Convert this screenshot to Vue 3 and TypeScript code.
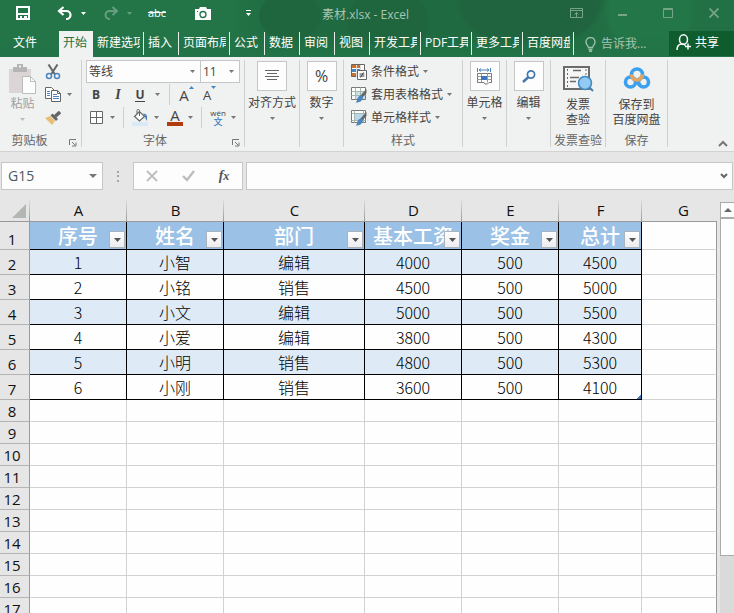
<script setup lang="ts">
import { ref } from 'vue'

interface Tab {
  label: string
  wide?: boolean
}

interface Row {
  id: number
  name: string
  dept: string
  base: number
  bonus: number
  total: number
}

const tabs: Tab[] = [
  { label: '新建选项', wide: true },
  { label: '插入' },
  { label: '页面布局', wide: true },
  { label: '公式' },
  { label: '数据' },
  { label: '审阅' },
  { label: '视图' },
  { label: '开发工具', wide: true },
  { label: 'PDF工具', wide: true },
  { label: '更多工具', wide: true },
  { label: '百度网盘', wide: true },
]

const columns: string[] = ['A', 'B', 'C', 'D', 'E', 'F', 'G']
const headings: string[] = ['序号', '姓名', '部门', '基本工资', '奖金', '总计']
const rows: Row[] = [
  { id: 1, name: '小智', dept: '编辑', base: 4000, bonus: 500, total: 4500 },
  { id: 2, name: '小铭', dept: '销售', base: 4500, bonus: 500, total: 5000 },
  { id: 3, name: '小文', dept: '编辑', base: 5000, bonus: 500, total: 5500 },
  { id: 4, name: '小爱', dept: '编辑', base: 3800, bonus: 500, total: 4300 },
  { id: 5, name: '小明', dept: '销售', base: 4800, bonus: 500, total: 5300 },
  { id: 6, name: '小刚', dept: '销售', base: 3600, bonus: 500, total: 4100 },
]
const emptyRows: number[] = Array.from({ length: 10 }, (_, i) => i + 8)

const cellRef = ref('G15')
const formula = ref('')
</script>

<template>
  <div class="excel">
    <header class="top">
      <div class="titlebar">
        <div class="quick">
          <button class="ib" type="button" aria-label="保存">
            <svg width="14" height="14" viewBox="0 0 14 14"><path d="M1 1h12v12H1z" fill="none" stroke="#fff" stroke-width="2" /><path d="M2 7h10v2H2zM4 10h2v3H4zM8 10h3v3H8z" fill="#fff" /></svg>
          </button>
          <div class="pair">
            <button class="ib undo" type="button" aria-label="撤消">
              <svg width="16" height="14" viewBox="0 0 16 14"><path d="M2 5h7.500a4 4 0 0 1 0 8H9M6.500 1 2 5l4.500 4" fill="none" stroke="#fff" stroke-width="2.200" /></svg>
            </button>
            <button class="ib drop" type="button" aria-label="撤消列表">
              <svg width="5" height="3" viewBox="0 0 5 3"><path d="M0 0h5L2.500 3z" fill="#fff" /></svg>
            </button>
          </div>
          <div class="pair faded">
            <button class="ib undo" type="button" aria-label="恢复">
              <svg width="16" height="14" viewBox="0 0 16 14"><path d="M14 5H6.500a4 4 0 0 0 0 8H7M9.500 1 14 5 9.500 9" fill="none" stroke="#fff" stroke-width="2" /></svg>
            </button>
            <button class="ib drop" type="button" aria-label="恢复列表">
              <svg width="5" height="3" viewBox="0 0 5 3"><path d="M0 0h5L2.500 3z" fill="#fff" /></svg>
            </button>
          </div>
          <button class="ib strike" type="button">abc</button>
          <button class="ib" type="button" aria-label="照相机">
            <svg width="16" height="13" viewBox="0 0 16 13"><path d="M0 2h4l1-2h6l1 2h4v11H0z" fill="#fff" /><circle cx="8" cy="7.500" r="3" fill="none" stroke="#217346" stroke-width="1.300" /><path d="M2 4h1v1H2z" fill="#217346" /></svg>
          </button>
          <button class="ib" type="button" aria-label="自定义快速访问工具栏">
            <svg width="5" height="6" viewBox="0 0 5 6"><path d="M0 0h5v1H0zM0 3h5L2.500 6z" fill="#fff" /></svg>
          </button>
        </div>
        <h1 class="title">素材.xlsx - Excel</h1>
        <div class="window">
          <button class="ib" type="button" aria-label="功能区显示选项">
            <svg width="13" height="10" viewBox="0 0 13 10"><path d="M.5.5h12v9H.5zM1 2.500h11M6.500 9V4.500M4.500 6.500l2-2 2 2" fill="none" stroke="#75a489" /></svg>
          </button>
          <button class="ib" type="button" aria-label="最小化">
            <svg width="9" height="10" viewBox="0 0 9 10"><path d="M0 6h9v2H0z" fill="#75a489" /></svg>
          </button>
          <button class="ib" type="button" aria-label="最大化">
            <svg width="10" height="10" viewBox="0 0 10 10"><path d="M.5.5h9v9h-9zM0 1.500h10" fill="none" stroke="#75a489" /></svg>
          </button>
          <button class="ib" type="button" aria-label="关闭">
            <svg width="10" height="10" viewBox="0 0 10 10"><path d="m.5.500 9 9m0-9-9 9" stroke="#75a489" stroke-width="1.800" /></svg>
          </button>
        </div>
      </div>
      <nav class="tabs">
        <button class="file" type="button">文件</button>
        <button class="tab active" type="button">开始</button>
        <button v-for="t in tabs" :key="t.label" class="tab" :class="{ wide: t.wide }" type="button">
          <span>{{ t.label }}</span>
        </button>
        <button class="tell" type="button">
          <svg width="11" height="15" viewBox="0 0 11 15"><path d="M3.500 10.500c0-2-2.500-2.500-2.500-5.500a4.500 4.500 0 0 1 9 0c0 3-2.500 3.500-2.500 5.500zM3.500 12.500h4M4 14.300h3" fill="none" stroke="#9cbfab" stroke-width="1.400" /></svg>
          <span>告诉我...</span>
        </button>
        <button class="share" type="button">
          <svg width="16" height="17" viewBox="0 0 16 17"><path d="M1 16c0-4 2-6 5-6 1.500 0 2.500.5 3.500 1.500M12 9.500v6M9 12.500h6" fill="none" stroke="#fff" stroke-width="1.500" /><ellipse cx="7.500" cy="5.500" rx="4" ry="4.700" fill="none" stroke="#fff" stroke-width="1.500" /></svg>
          <span>共享</span>
        </button>
      </nav>
    </header>

    <section class="ribbon">
      <div class="group clip">
        <div class="body">
          <button class="big paste" type="button">
            <svg width="29" height="31" viewBox="0 0 29 31"><path d="M1 5h22v24H1z" fill="#dcd5d6" /><path d="M5 3h4V0h6v3h4v5H5z" fill="#b5b5b5" /><path d="M11 1.500h2v2h-2z" fill="#eee" /><path d="M14.500 12.500h8l5 5v12h-13z" fill="#fdfdfd" stroke="#bcbcbc" /><path d="M22.500 12.500v5h5" fill="none" stroke="#bcbcbc" /></svg>
            <span>粘贴</span>
            <svg class="caret" width="5" height="3" viewBox="0 0 5 3"><path d="M0 0h5L2.500 3z" /></svg>
          </button>
          <div class="stack">
            <button class="tool" type="button" aria-label="剪切">
              <svg width="16" height="16" viewBox="0 0 16 16"><path d="m3.500.5 6.500 10M12.500.500 6 10.500" stroke="#666" stroke-width="2" /><circle cx="4" cy="12" r="2.500" fill="none" stroke="#4a86bd" stroke-width="1.500" /><circle cx="12" cy="12" r="2.500" fill="none" stroke="#4a86bd" stroke-width="1.500" /></svg>
            </button>
            <button class="tool" type="button" aria-label="复制">
              <svg width="16" height="15" viewBox="0 0 16 15"><path d="M.5.500h6l3 3v8h-9z" fill="#fff" stroke="#666" /><path d="M2 4.500h3M2 6.500h3M2 8.500h3" stroke="#4a86bd" /><path d="M6.500 3.500h6l3 3v8h-9z" fill="#fff" stroke="#666" /><path d="M12.500 3.500v3h3" fill="none" stroke="#666" /><path d="M8 7.500h4M8 9.500h6M8 11.500h6" stroke="#4a86bd" /></svg>
              <svg class="caret" width="5" height="3" viewBox="0 0 5 3"><path d="M0 0h5L2.500 3z" /></svg>
            </button>
            <button class="tool" type="button" aria-label="格式刷">
              <svg width="16" height="14" viewBox="0 0 16 14"><path d="m0 7 5-2 5 5-3 4z" fill="#e8be79" /><path d="m5.500 4.500 2-2L13 8l-2 2z" fill="#666" /><path d="M10 5.500 15 1" stroke="#666" stroke-width="3.500" /></svg>
            </button>
          </div>
        </div>
        <div class="name">剪贴板</div>
        <button class="launch" type="button" aria-label="剪贴板设置">
          <svg width="8" height="8" viewBox="0 0 8 8"><path d="M.5 6V.5H7M3 3l3 3M7 3.500V7H3" fill="none" stroke="#777" /></svg>
        </button>
      </div>

      <div class="group font">
        <div class="body lines">
          <div class="line selects">
            <label class="pick family">
              <select aria-label="字体"><option>等线</option></select>
              <svg class="caret" width="5" height="3" viewBox="0 0 5 3"><path d="M0 0h5L2.500 3z" /></svg>
            </label>
            <label class="pick size">
              <select aria-label="字号"><option>11</option></select>
              <svg class="caret" width="5" height="3" viewBox="0 0 5 3"><path d="M0 0h5L2.500 3z" /></svg>
            </label>
          </div>
          <div class="line styles">
            <button class="tool b" type="button">B</button>
            <button class="tool i" type="button">I</button>
            <button class="tool u" type="button"><span>U</span></button>
            <button class="tool drop" type="button" aria-label="下划线类型">
              <svg class="caret" width="5" height="3" viewBox="0 0 5 3"><path d="M0 0h5L2.500 3z" /></svg>
            </button>
            <i class="sep"></i>
            <button class="tool grow" type="button" aria-label="增大字号">
              <span>A</span>
              <svg width="5" height="3" viewBox="0 0 5 3"><path d="M0 3h5L2.500 0z" fill="#4a86bd" /></svg>
            </button>
            <button class="tool grow small" type="button" aria-label="减小字号">
              <span>A</span>
              <svg width="5" height="3" viewBox="0 0 5 3"><path d="M0 0h5L2.500 3z" fill="#4a86bd" /></svg>
            </button>
          </div>
          <div class="line fills">
            <button class="tool border" type="button" aria-label="边框">
              <svg width="13" height="13" viewBox="0 0 13 13"><path d="M.5.5h12v12H.5zM6.500 0v13M0 6.500h13" fill="#fff" stroke="#666" /></svg>
              <svg class="caret" width="5" height="3" viewBox="0 0 5 3"><path d="M0 0h5L2.500 3z" /></svg>
            </button>
            <i class="sep"></i>
            <button class="tool" type="button" aria-label="填充颜色">
              <svg width="17" height="17" viewBox="0 0 17 17"><path d="M0 13h16v4H0z" fill="#d9e9f6" /><path d="m2.500 7.500 5-5 5 5-5 4.500z" fill="#fff" stroke="#666" stroke-width="1.200" /><path d="M7.500 7V1.500C7.500 0 5 0 5 1.500V5" fill="none" stroke="#666" /><path d="M11 4.500c4 0 5 3 3.500 7.500-1-2-1-4-3.500-7.500z" fill="#4a86bd" /></svg>
              <svg class="caret" width="5" height="3" viewBox="0 0 5 3"><path d="M0 0h5L2.500 3z" /></svg>
            </button>
            <button class="tool" type="button" aria-label="字体颜色">
              <span class="ink">A</span>
              <svg class="caret" width="5" height="3" viewBox="0 0 5 3"><path d="M0 0h5L2.500 3z" /></svg>
            </button>
            <i class="sep"></i>
            <button class="tool" type="button">
              <span class="pinyin"><span>wén</span><b>文</b></span>
              <svg class="caret" width="5" height="3" viewBox="0 0 5 3"><path d="M0 0h5L2.500 3z" /></svg>
            </button>
          </div>
        </div>
        <div class="name">字体</div>
        <button class="launch" type="button" aria-label="字体设置">
          <svg width="8" height="8" viewBox="0 0 8 8"><path d="M.5 6V.5H7M3 3l3 3M7 3.500V7H3" fill="none" stroke="#777" /></svg>
        </button>
      </div>

      <div class="group mid">
        <button class="big" type="button">
          <span class="tile"><svg width="14" height="12" viewBox="0 0 14 12"><path d="M0 .5h14M2 3.500h10M0 6.500h14M2 9.500h10" stroke="#666" /></svg></span>
          <span>对齐方式</span>
          <svg class="caret" width="5" height="3" viewBox="0 0 5 3"><path d="M0 0h5L2.500 3z" /></svg>
        </button>
      </div>
      <div class="group slim">
        <button class="big" type="button">
          <span class="tile percent">%</span>
          <span>数字</span>
          <svg class="caret" width="5" height="3" viewBox="0 0 5 3"><path d="M0 0h5L2.500 3z" /></svg>
        </button>
      </div>

      <div class="group look">
        <div class="body lines">
          <button class="tool item" type="button">
            <svg width="16" height="16" viewBox="0 0 16 16"><path d="M.5.500h13v12H.500z" fill="#fff" stroke="#666" /><path d="M1 1h8v3H1zM1 9h6v3H1z" fill="#c8722c" /><path d="M1 5h9v3H1z" fill="#4a86bd" /><path d="M5.500 1v12M9.500 1v5" stroke="#ddd" /><path d="M6.500 6.500h9v9h-9z" fill="#fff" stroke="#666" /><path d="M8.500 10h5M8.500 12h5M12.500 8.500l-3 5" stroke="#444" /></svg>
            <span>条件格式</span>
            <svg class="caret" width="5" height="3" viewBox="0 0 5 3"><path d="M0 0h5L2.500 3z" /></svg>
          </button>
          <button class="tool item" type="button">
            <svg width="16" height="16" viewBox="0 0 16 16"><path d="M.5.500h14v12H.500z" fill="#fff" stroke="#777" /><path d="M5 4h9v8H5z" fill="#cde0ee" /><path d="M.5 4.500h14M.5 8.500h14M4.500.5v12M9.500.5v12" stroke="#a5b9aa" /><path d="M15.500 2v4l-4.500 5-2-2z" fill="#666" /><path d="M10.500 8.500c2 1 2 3 0 5-1 1.500-3 2-6 2 2-1 1-3 2.500-5 1-1.500 2-2 3.500-2z" fill="#4a86bd" /></svg>
            <span>套用表格格式</span>
            <svg class="caret" width="5" height="3" viewBox="0 0 5 3"><path d="M0 0h5L2.500 3z" /></svg>
          </button>
          <button class="tool item" type="button">
            <svg width="16" height="16" viewBox="0 0 16 16"><path d="M.5.500h14v12H.500z" fill="#fff" stroke="#777" /><path d="M3.500.5v12M12.500.5v12M.5 3.500h14M.5 10.500h14" stroke="#a5b9aa" /><path d="M4 4h8v6H4z" fill="#b9d7ec" /><path d="M15.500 2v4l-4.500 5-2-2z" fill="#666" /><path d="M10.500 8.500c2 1 2 3 0 5-1 1.500-3 2-6 2 2-1 1-3 2.500-5 1-1.500 2-2 3.500-2z" fill="#4a86bd" /></svg>
            <span>单元格样式</span>
            <svg class="caret" width="5" height="3" viewBox="0 0 5 3"><path d="M0 0h5L2.500 3z" /></svg>
          </button>
        </div>
        <div class="name">样式</div>
      </div>

      <div class="group slim">
        <button class="big" type="button">
          <span class="tile"><svg width="15" height="17" viewBox="0 0 15 17"><path d="M.5 0v4M13.500 0v4M2 2h10M4 .5 2 2l2 1.500M10 .5 12 2l-2 1.500" fill="none" stroke="#4a86bd" /><path d="M.5 5.500h14v9H12l-1.500 1.500H8l-1-1.500H.5z" fill="#fff" stroke="#777" /><path d="M.5 8.500h14M.5 11.500h14M4.500 5.500v9M10.500 5.500v9" stroke="#999" /><path d="M4 8h6v4H4z" fill="#3a78bd" /></svg></span>
          <span>单元格</span>
          <svg class="caret" width="5" height="3" viewBox="0 0 5 3"><path d="M0 0h5L2.500 3z" /></svg>
        </button>
      </div>
      <div class="group slim">
        <button class="big" type="button">
          <span class="tile"><svg width="14" height="13" viewBox="0 0 14 13"><circle cx="9" cy="4.500" r="3.600" fill="none" stroke="#4178ae" stroke-width="1.700" /><path d="M6.500 7 1 12" stroke="#4178ae" stroke-width="2.400" /></svg></span>
          <span>编辑</span>
          <svg class="caret" width="5" height="3" viewBox="0 0 5 3"><path d="M0 0h5L2.500 3z" /></svg>
        </button>
      </div>

      <div class="group mid">
        <button class="big two" type="button">
          <svg width="32" height="27" viewBox="0 0 32 27"><path d="M2 2h25v22H2z" fill="#f6f6f6" stroke="#6b6b6b" stroke-width="2" /><path d="M5.500 4v18M24 4v8" stroke="#6b6b6b" stroke-dasharray="2 2" /><path d="M11 5.500h8M8 12.500h9M8 16.500h6" stroke="#6b6b6b" stroke-width="1.600" /><path d="m27 22 4 4" stroke="#3f7faf" stroke-width="2" /><circle cx="23" cy="18" r="6.500" fill="#90caf5" stroke="#4489bd" stroke-width="1.500" /></svg>
          <span>发票<br />查验</span>
        </button>
        <div class="name">发票查验</div>
      </div>
      <div class="group save">
        <button class="big two" type="button">
          <svg width="28" height="27" viewBox="0 0 28 27"><g fill="none" stroke-width="3.600"><circle cx="7.500" cy="17" r="5" stroke="#3ba0ee" /><circle cx="20.500" cy="17" r="5" stroke="#3ba0ee" /><path d="m10.500 13.500 7 7M17.500 13.500l-3.500 3.500" stroke="#3ba0ee" /><circle cx="14" cy="9.500" r="5.500" stroke="#3ba0ee" /><path d="M8.500 9.500a5.500 5.500 0 0 0 11 0" stroke="#e8a45c" /></g></svg>
          <span>保存到<br />百度网盘</span>
        </button>
        <div class="name">保存</div>
      </div>
      <button class="collapse" type="button" aria-label="折叠功能区">
        <svg width="10" height="7" viewBox="0 0 10 7"><path d="m1 6 4-4 4 4" fill="none" stroke="#777" stroke-width="2" /></svg>
      </button>
    </section>

    <section class="formulabar">
      <label class="namebox">
        <input v-model="cellRef" type="text" aria-label="名称框" />
        <svg width="8" height="4" viewBox="0 0 8 4"><path d="M0 0h8L4 4z" fill="#777" /></svg>
      </label>
      <svg class="grip" width="2" height="11" viewBox="0 0 2 11"><path d="M0 0h2v2H0zM0 4h2v2H0zM0 9h2v2H0z" fill="#a5a5a5" /></svg>
      <div class="actions">
        <button class="tool" type="button" aria-label="取消">
          <svg width="12" height="12" viewBox="0 0 12 12"><path d="m1 1 10 10M11 1 1 11" stroke="#bdbdbd" stroke-width="1.800" /></svg>
        </button>
        <button class="tool" type="button" aria-label="输入">
          <svg width="13" height="12" viewBox="0 0 13 12"><path d="m1 6 4 4 7-9" fill="none" stroke="#bdbdbd" stroke-width="2.400" /></svg>
        </button>
        <button class="tool fx" type="button"><span>f<small>x</small></span></button>
      </div>
      <label class="formula">
        <input v-model="formula" type="text" aria-label="编辑栏" />
        <svg width="8" height="6" viewBox="0 0 8 6"><path d="m1 1 3 3 3-3" fill="none" stroke="#666" stroke-width="2" /></svg>
      </label>
    </section>

    <main class="sheet">
      <div class="gridwrap">
        <table>
          <colgroup>
            <col class="c-head" />
            <col class="c-std" />
            <col class="c-std" />
            <col class="c-dept" />
            <col class="c-std" />
            <col class="c-std" />
            <col class="c-total" />
            <col />
          </colgroup>
          <thead>
            <tr>
              <th class="corner" aria-label="全选">
                <svg width="14" height="14" viewBox="0 0 14 14"><path d="M14 0v14H0z" fill="#b3b7b3" /></svg>
              </th>
              <th v-for="c in columns" :key="c" class="col" scope="col">{{ c }}</th>
            </tr>
          </thead>
          <tbody>
            <tr class="heading">
              <th class="rownum" scope="row">1</th>
              <td v-for="h in headings" :key="h">
                <span>{{ h }}</span>
                <button class="filter" type="button" :aria-label="'筛选 ' + h">
                  <svg width="7" height="4" viewBox="0 0 7 4"><path d="M0 0h7L3.500 4z" fill="#555" /></svg>
                </button>
              </td>
              <td class="blank"></td>
            </tr>
            <tr v-for="(r, i) in rows" :key="r.id" class="record" :class="{ band: i % 2 === 0 }">
              <th class="rownum" scope="row">{{ i + 2 }}</th>
              <td>{{ r.id }}</td>
              <td>{{ r.name }}</td>
              <td>{{ r.dept }}</td>
              <td>{{ r.base }}</td>
              <td>{{ r.bonus }}</td>
              <td :class="{ end: i === rows.length - 1 }">{{ r.total }}</td>
              <td class="blank"></td>
            </tr>
            <tr v-for="n in emptyRows" :key="n" class="empty">
              <th class="rownum" scope="row">{{ n }}</th>
              <td v-for="c in columns" :key="c"></td>
            </tr>
          </tbody>
        </table>
      </div>
      <div class="scroll">
        <button class="up" type="button" aria-label="向上滚动">
          <svg width="8" height="4" viewBox="0 0 8 4"><path d="M0 4h8L4 0z" fill="#666" /></svg>
        </button>
        <div class="thumb"></div>
        <div class="track"></div>
      </div>
    </main>
  </div>
</template>

<style>
body {
  margin: 0;
  overflow: hidden;
}
</style>

<style scoped>
.excel {
  display: flex;
  flex-direction: column;
  height: 100vh;
  overflow: hidden;
  background: #e6e6e6;
  color: #444;
  font: 12px/16px "Open Sans", "Noto Sans CJK SC", sans-serif;
}
.excel * {
  box-sizing: border-box;
}
svg {
  display: block;
  flex: none;
}
button {
  margin: 0;
  padding: 0;
  border: 0;
  background: none;
  color: inherit;
  font: inherit;
  white-space: nowrap;
}

.top {
  flex: none;
  overflow: hidden;
  color: #fff;
  background:
    linear-gradient(transparent 60%, #227347 96%),
    radial-gradient(ellipse 32px 26px at 290px 16px, #1f653e 92%, transparent),
    radial-gradient(ellipse 42px 36px at 388px 22px, #1f653e 92%, transparent),
    radial-gradient(circle at 650px 12px, #237648 0 40px, transparent 46px),
    radial-gradient(ellipse 75px 50px at 530px 0, #1f643e 92%, transparent),
    linear-gradient(90deg, #237548 30%, #206a41 40%, #206a41 72%, #227045 85%);
}
.titlebar {
  display: grid;
  grid-template-columns: 1fr auto 1fr;
  align-items: center;
  height: 31px;
  padding-bottom: 5px;
}
.quick {
  display: grid;
  grid-template-columns: 46px 54px 38px 38px 54px 36px;
  align-items: center;
}
.ib {
  display: flex;
  align-items: center;
  justify-content: center;
  height: 26px;
}
.pair {
  display: flex;
  justify-content: center;
}
.undo {
  width: 20px;
}
.drop {
  width: 16px;
}
.faded {
  opacity: 0.3;
}
.strike {
  font-size: 11px;
  text-decoration: line-through;
}
.title {
  margin: 0;
  padding: 3px 3px 0 0;
  color: #a9c6b5;
  font-size: 12px;
  font-weight: 400;
}
.window {
  display: flex;
  justify-content: flex-end;
  margin-right: -3px;
}
.window .ib {
  width: 46px;
}

.tabs {
  display: flex;
  height: 26px;
}
.file {
  width: 59px;
  padding: 0 9px 2px 0;
}
.tab {
  position: relative;
  width: 35px;
  padding: 0 4px 2px;
  text-align: left;
}
.tab.wide {
  width: 51px;
}
.tab span {
  display: block;
  overflow: hidden;
}
.tab:not(.active)::after {
  content: "";
  position: absolute;
  top: 1px;
  right: 0;
  bottom: 2px;
  width: 1px;
  background: #e4efe8;
}
.tab.active {
  width: 34px;
  background: #f0f1f1;
  color: #217346;
}
.tell {
  display: flex;
  align-items: center;
  gap: 5px;
  margin-left: 11px;
  color: #a5c5b3;
}
.share {
  display: flex;
  align-items: center;
  justify-content: center;
  gap: 3px;
  width: 65px;
  height: 25px;
  margin-left: auto;
  padding: 0 8px 2px 0;
  background: #0f5c2f;
}

.ribbon {
  display: flex;
  flex: none;
  height: 95px;
  padding: 3px 0 4px;
  border-bottom: 1px solid #d2d2d2;
  background: #f0f1f1;
}
.group {
  position: relative;
  display: flex;
  flex: none;
  flex-direction: column;
  border-right: 1px solid #d0d0d0;
}
.clip {
  width: 82px;
}
.font {
  width: 163px;
}
.mid {
  width: 55px;
}
.slim {
  width: 44px;
}
.look {
  width: 119px;
}
.save {
  width: 62px;
}
.name {
  margin-top: auto;
  color: #666;
  text-align: center;
  line-height: 12px;
  white-space: nowrap;
}
.clip .name {
  padding-right: 22px;
}
.font .name {
  padding-right: 16px;
}
.launch {
  position: absolute;
  right: 4px;
  bottom: 0;
}
.body {
  display: flex;
}
.lines {
  flex-direction: column;
}
.caret {
  fill: #777;
}
.big {
  display: flex;
  flex-direction: column;
  align-items: center;
  width: 100%;
  padding-top: 1px;
}
.big .caret {
  margin-top: 6px;
}
.tile {
  display: flex;
  align-items: center;
  justify-content: center;
  width: 30px;
  height: 30px;
  margin-bottom: 4px;
  border: 1px solid #c6c6c6;
  background: #fdfdfd;
}
.percent {
  font-size: 16px;
}
.big.two {
  padding-top: 5px;
}
.big.two span {
  margin-top: 5px;
  line-height: 15px;
}
.paste {
  width: 42px;
  padding: 4px 0 0 3px;
  color: #a0a0a0;
}
.paste span {
  margin-top: 1px;
}
.paste .caret {
  fill: #bbb;
}
.stack {
  padding-left: 3px;
}
.tool {
  display: flex;
  align-items: center;
  height: 23px;
}
.stack .tool {
  gap: 6px;
}
.line {
  display: flex;
  align-items: center;
  height: 23px;
}
.selects {
  padding-left: 4px;
}
.pick {
  display: flex;
  align-items: center;
  height: 23px;
  padding-right: 5px;
  border: 1px solid #c6c6c6;
  background: #fdfdfd;
}
.family {
  width: 115px;
}
.size {
  width: 39px;
  border-left: 0;
}
.pick select {
  flex: 1;
  min-width: 0;
  padding: 0 0 0 2px;
  border: 0;
  appearance: none;
  background: none;
  color: #444;
  font: inherit;
}
.sep {
  width: 1px;
  height: 21px;
  background: #d0d0d0;
}
.styles .tool,
.fills .tool {
  justify-content: center;
}
.styles {
  padding-left: 3px;
}
.b,
.i,
.u {
  width: 22px;
  font-size: 12px;
  font-weight: 700;
}
.i {
  font-family: "Liberation Serif", serif;
  font-size: 14px;
  font-style: italic;
}
.u span {
  border-bottom: 1px solid #444;
  line-height: 13px;
}
.styles .drop {
  width: 13px;
}
.styles .sep {
  margin: 0 5px;
}
.grow {
  width: 23px;
  font-size: 15px;
}
.grow svg {
  align-self: flex-start;
  margin-top: 3px;
}
.grow.small {
  font-size: 13px;
}
.fills {
  gap: 8px;
  padding-left: 8px;
}
.fills .tool {
  gap: 5px;
}
.fills .border {
  gap: 7px;
}
.ink {
  width: 16px;
  border-bottom: 4px solid #b23c0c;
  font-size: 15px;
  line-height: 13px;
}
.pinyin {
  display: flex;
  flex-direction: column;
  align-items: center;
  width: 16px;
  font-size: 8px;
  line-height: 9px;
}
.pinyin b {
  color: #3f7fbd;
  font-size: 9px;
  font-weight: 500;
  line-height: 10px;
}
.item {
  gap: 4px;
  padding-left: 7px;
}
.collapse {
  align-self: flex-end;
  margin: 0 6px 0 auto;
}

.formulabar {
  display: flex;
  flex: none;
  align-items: center;
  height: 48px;
  padding: 0 1px;
}
.namebox,
.formula,
.actions {
  display: flex;
  align-items: center;
  height: 28px;
  border: 1px solid #c6c6c6;
  background: #fdfdfd;
}
.namebox {
  width: 102px;
  padding-right: 5px;
}
.namebox input,
.formula input {
  flex: 1;
  min-width: 0;
  padding: 0 0 0 6px;
  border: 0;
  outline: 0;
  background: none;
  color: #4b5a5e;
  font: 14px/20px "Open Sans", sans-serif;
}
.grip {
  margin: 0 14px;
}
.actions {
  width: 110px;
}
.actions .tool {
  flex: 1;
  justify-content: center;
}
.fx {
  color: #555;
  font: italic 700 14px/20px "Liberation Serif", serif;
}
.fx small {
  font-size: 12px;
}
.formula {
  flex: 1;
  margin-left: 3px;
  padding-right: 4px;
}

.sheet {
  display: flex;
  flex: 1;
  gap: 3px;
  min-height: 0;
}
.gridwrap {
  flex: 1;
  min-width: 0;
  overflow: hidden;
}
table {
  width: 100%;
  border-spacing: 0;
  table-layout: fixed;
  background: #fefefe;
}
.c-head {
  width: 30px;
}
.c-std {
  width: 97px;
}
.c-dept {
  width: 141px;
}
.c-total {
  width: 83px;
}
th,
td {
  padding: 0;
  font-weight: 400;
  text-align: center;
}
.corner,
.col {
  height: 22px;
  border-bottom: 1px solid #9a9a9a;
  background: linear-gradient(#dcdcdc, #999) right / 1px 100% no-repeat #e6e6e6;
  color: #111;
  font-size: 15px;
  line-height: 21px;
}
.col:last-child {
  padding-left: 8px;
  background: #e6e6e6;
}
.corner svg {
  margin-left: 12px;
}
.rownum {
  padding-right: 5px;
  border-right: 1px solid #9a9a9a;
  border-bottom: 1px solid #b4b4b4;
  background: #e6e6e6;
  color: #111;
  font-size: 15px;
  line-height: 19px;
  vertical-align: bottom;
}
td {
  border-right: 1px solid #d2d2d2;
  border-bottom: 1px solid #d2d2d2;
}
.heading td,
.record td {
  position: relative;
  border-color: #000;
}
.heading td {
  height: 28px;
  background: #9bc1e6;
  color: #fff;
  font: 500 20px/27px "Noto Sans CJK SC", sans-serif;
  white-space: nowrap;
}
.record td {
  height: 25px;
  color: #000;
  font: 300 16px/24px "Noto Sans CJK SC", sans-serif;
}
.band td {
  background: #deebf6;
}
.empty td {
  height: 22px;
}
.heading .blank,
.record .blank {
  border-color: #d2d2d2;
  background: #fefefe;
}
td:last-child {
  border-right-color: #9a9a9a !important;
}
.filter {
  position: absolute;
  right: 1px;
  bottom: 1px;
  display: flex;
  align-items: center;
  justify-content: center;
  width: 16px;
  height: 17px;
  border: 1px solid #a9b4bf;
  background: linear-gradient(#fff, #ececef);
}
.end::after {
  content: "";
  position: absolute;
  right: 0;
  bottom: 0;
  width: 5px;
  height: 5px;
  background: linear-gradient(135deg, transparent 50%, #3c78bd 50%);
}
.scroll {
  display: flex;
  flex: none;
  flex-direction: column;
  width: 14px;
  padding-top: 2px;
}
.up {
  display: flex;
  flex: none;
  align-items: center;
  justify-content: center;
  height: 16px;
  border: 1px solid #ababab;
  border-right: 0;
  background: #fdfdfd;
}
.thumb {
  flex: 338;
  border: 1px solid #ababab;
  border-right: 0;
  background: #fefefe;
}
.track {
  flex: 57;
  background: #dadada;
}
</style>
